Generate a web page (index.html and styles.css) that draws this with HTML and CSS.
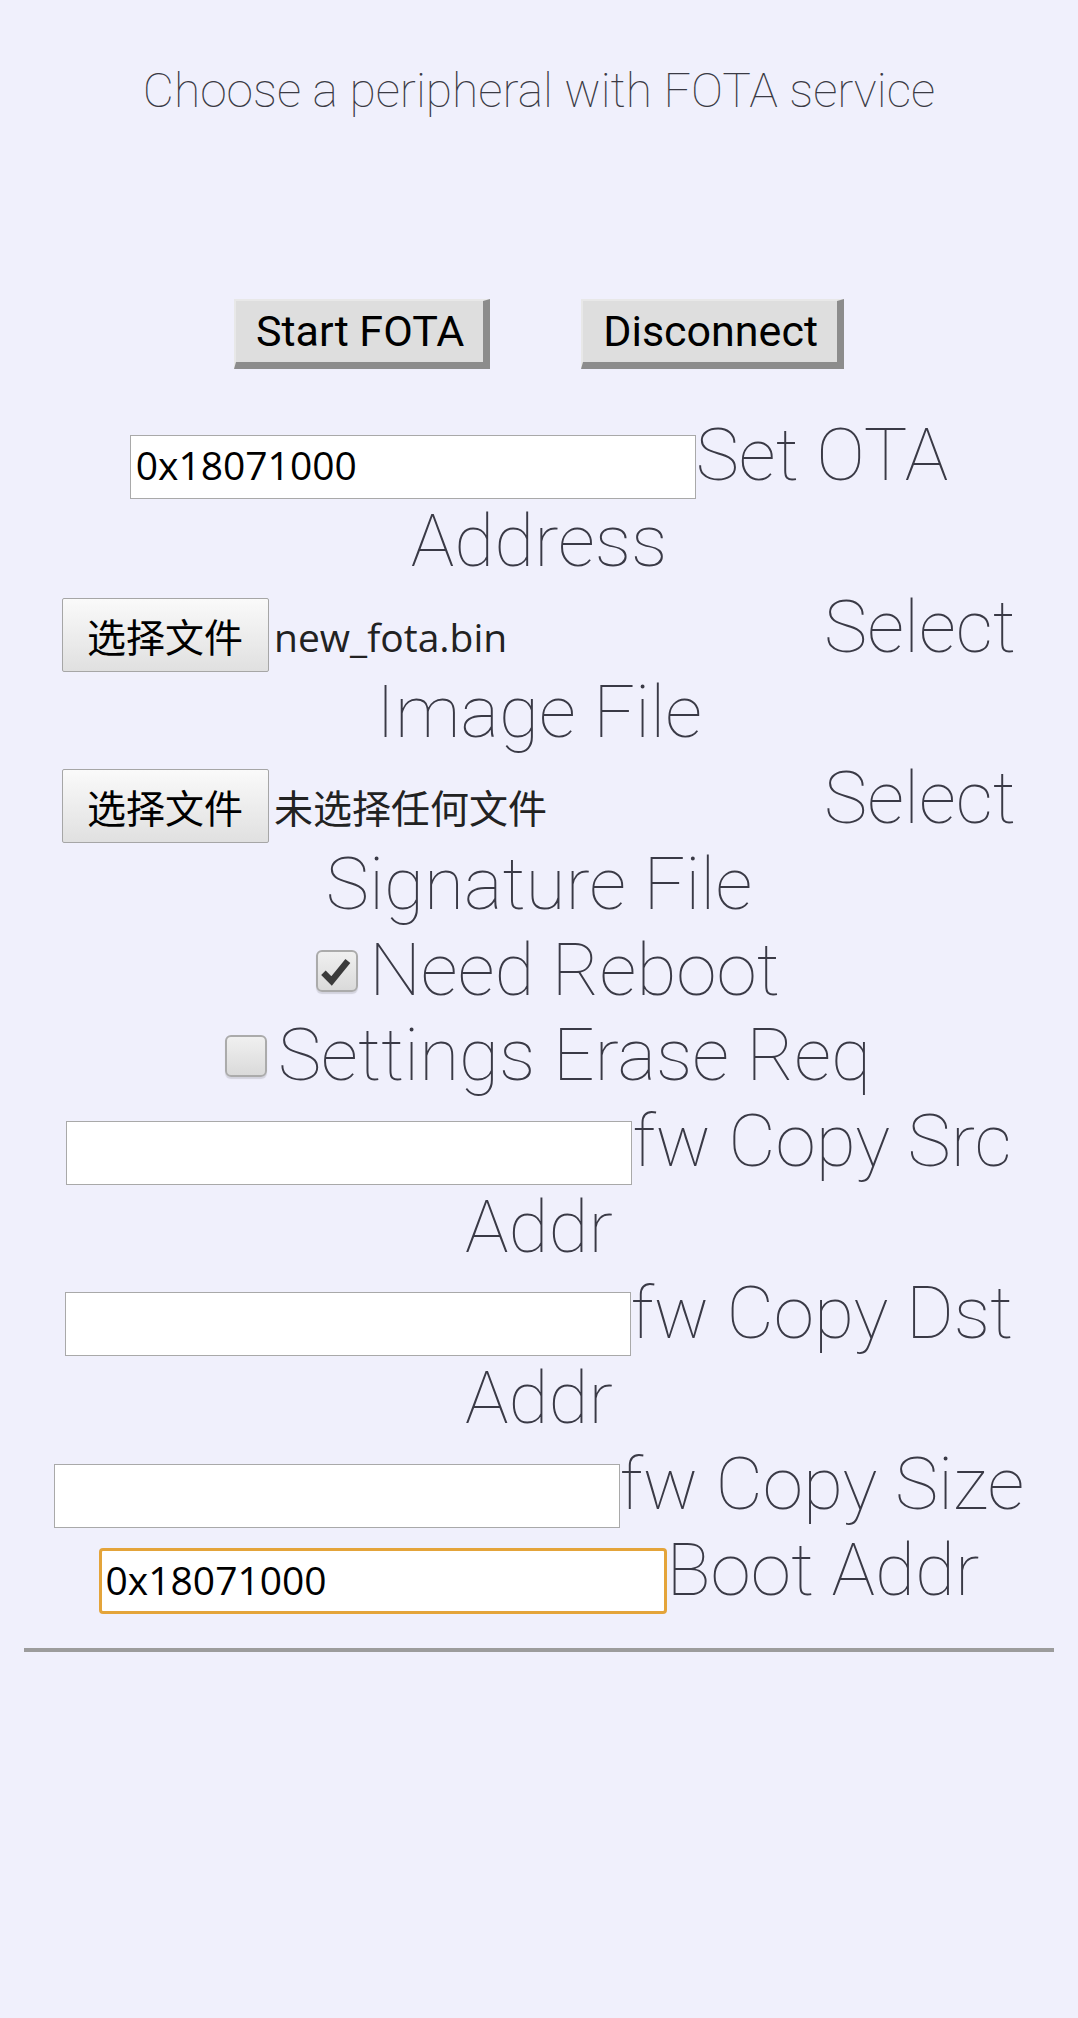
FILE: index.html
```html
<!DOCTYPE html>
<html lang="zh-CN">
<head>
<meta charset="utf-8">
<title>FOTA</title>
<link rel="stylesheet" href="styles.css">
</head>
<body>
<div class="page">
  <h1 class="title">Choose a peripheral with FOTA service</h1>
  <div class="actions">
    <button class="btn">Start FOTA</button>
    <button class="btn">Disconnect</button>
  </div>
  <div class="form">
    <div class="row"><input class="field" type="text" value="0x18071000"><label class="lbl">Set OTA Address</label></div>
    <div class="row"><span class="file"><span class="file-btn">选择文件</span><span class="file-name">new_fota.bin</span></span><label class="lbl">Select Image File</label></div>
    <div class="row"><span class="file"><span class="file-btn">选择文件</span><span class="file-name">未选择任何文件</span></span><label class="lbl">Select Signature File</label></div>
    <div class="row"><span class="cb"><svg class="tick" viewBox="0 0 42 42" width="38" height="38"><path d="M6 23 L15 32 L33 10" fill="none" stroke="#3b3b3b" stroke-width="7"/></svg></span><label class="lbl cb-lbl">Need Reboot</label></div>
    <div class="row"><span class="cb"></span><label class="lbl cb-lbl">Settings Erase Req</label></div>
    <div class="row"><input class="field" type="text" value=""><label class="lbl">fw Copy Src Addr</label></div>
    <div class="row"><input class="field" type="text" value=""><label class="lbl">fw Copy Dst Addr</label></div>
    <div class="row"><input class="field" type="text" value=""><label class="lbl">fw Copy Size</label></div>
    <div class="row"><input class="field focused" type="text" value="0x18071000"><label class="lbl">Boot Addr</label></div>
  </div>
  <hr class="rule">
</div>
</body>
</html>
```
FILE: styles.css
```css
html, body {
  margin: 0;
  padding: 0;
}
body {
  background: #f0f0fc;
  font-family: "Roboto Thin", Roboto, "Noto Sans", sans-serif;
  color: #333;
}
.page {
  padding: 0 8px;
}
.title {
  margin: 63px 0 0;
  font-family: "Roboto Thin", Roboto, sans-serif;
  font-size: 48px;
  line-height: 56px;
  font-weight: 100;
  text-align: center;
  color: #3a3a44;
}
.actions {
  display: flex;
  justify-content: center;
  gap: 91px;
  margin-top: 180px;
}
.btn {
  font-family: Roboto, sans-serif;
  font-size: 43px;
  line-height: 50px;
  font-weight: 400;
  color: #000;
  background: #dedede;
  border-style: solid;
  border-width: 2px 7px 7px 2px;
  border-color: #e8e8e8 #8c8c8c #8c8c8c #e8e8e8;
  padding: 5px 19px 6px 20px;
  border-radius: 0;
  margin: 0;
}
.form {
  margin-top: 44px;
}
.row {
  text-align: center;
  font-family: "Roboto Thin", Roboto, sans-serif;
  font-size: 73px;
  line-height: 85.75px;
  font-weight: 100;
  color: #3a3a46;
}
.lbl {
  font-weight: 100;
}
.field {
  width: 566px;
  height: 64px;
  box-sizing: border-box;
  border: 1px solid #a9a9a9;
  border-radius: 0;
  background: #fff;
  font-family: "Open Sans", sans-serif;
  font-size: 39px;
  font-weight: 400;
  padding: 0 5px 4px;
  color: #000;
  margin: 0 0 -6px 0;
  vertical-align: baseline;
  outline: none;
}
.field.focused {
  width: 568px;
  height: 66px;
  border: 3px solid #e4a43a;
  border-radius: 4px;
  padding: 0 4px 4px;
}
.file {
  display: inline-block;
  width: 762px;
  text-align: left;
  font-family: "Open Sans", "Noto Sans CJK SC", sans-serif;
  font-size: 39px;
  line-height: 56px;
  font-weight: 400;
  color: #222;
  margin-bottom: -8px;
  vertical-align: baseline;
}
.file-btn {
  display: inline-block;
  font-family: "Noto Sans CJK SC", sans-serif;
  font-size: 39px;
  line-height: 56px;
  padding: 8px 25px 8px 24px;
  border: 1px solid #a6a6a6;
  border-radius: 2px;
  background: linear-gradient(#fafafa, #e0e0e0);
  color: #000;
  margin-right: 5px;
}
.cb {
  display: inline-block;
  width: 42px;
  height: 42px;
  box-sizing: border-box;
  border: 2px solid #ababab;
  border-radius: 6px;
  background: linear-gradient(#f0f0f0, #dadada);
  margin: 0 3px 3px 4px;
  vertical-align: baseline;
  box-shadow: 0 2px 1px rgba(0, 0, 0, 0.12);
}
.tick {
  display: block;
}
.cb-lbl {
  margin-left: 8px;
  margin-right: -14px;
}
.rule {
  border: 0;
  height: 4px;
  background: #9c9c9c;
  margin: 34px 16px 0;
}
```
